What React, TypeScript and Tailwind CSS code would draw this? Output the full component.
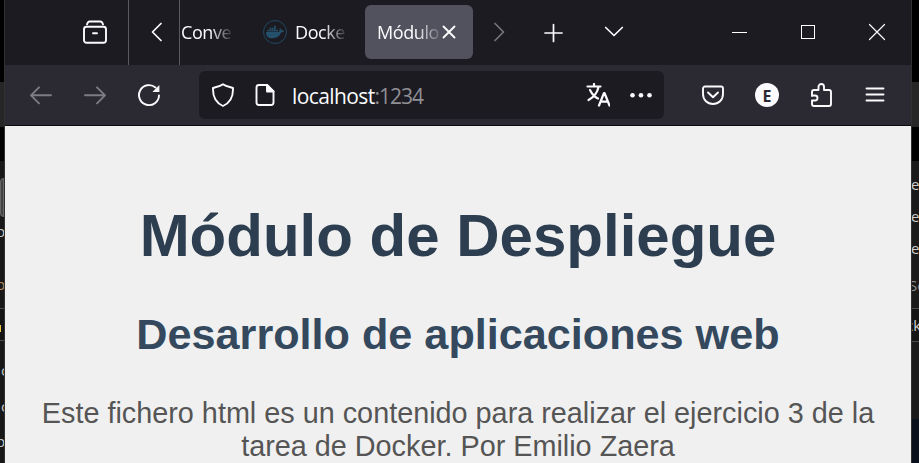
import React from "react";
import { FaDocker } from "react-icons/fa";

type IconProps = {
  children: React.ReactNode;
  size?: number;
  width?: number;
  className?: string;
};

function Icon({ children, size = 24, width = 1.9, className = "text-[#fbfbfe]" }: IconProps) {
  return (
    <svg
      width={size}
      height={size}
      viewBox="0 0 24 24"
      fill="none"
      stroke="currentColor"
      strokeWidth={width}
      strokeLinecap="round"
      strokeLinejoin="round"
      className={`block shrink-0 ${className}`}
    >
      {children}
    </svg>
  );
}

function Cell({ className, children }: { className: string; children: React.ReactNode }) {
  return <div className={`flex h-full shrink-0 items-center justify-center ${className}`}>{children}</div>;
}

const label = "whitespace-nowrap text-[18px] leading-6 tracking-[-0.4px] text-[#fbfbfe]";

function TabBar() {
  return (
    <div className="flex h-[65px] shrink-0 items-center bg-[#1c1b22] pb-px">
      <div className="flex h-full w-[123px] shrink-0 items-center pl-[78px]">
        <Icon>
          <path d="M4 4.400C4.600 2.400 5 1.500 6.500 1.500h11c1.500 0 1.900.9 2.500 2.900" />
          <rect x="1" y="6.800" width="22" height="16" rx="2.500" />
          <path d="M10 13.200h4" />
        </Icon>
      </div>
      <div className="-mb-px flex h-[65px] w-[52px] shrink-0 items-center justify-center border-x border-[#5b5a61] pb-px pl-1.5">
        <Icon width={1.700}><path d="M16 3.500 7.500 12l8.500 8.500" /></Icon>
      </div>
      <div className="w-[71px] shrink-0 pl-px">
        <div className={`w-[53px] ${label} [mask-image:linear-gradient(to_right,black_55%,transparent)]`}>Conve</div>
      </div>
      <div className="flex w-[114px] shrink-0 items-center gap-2 pl-3">
        <span className="flex size-6 shrink-0 items-center justify-center rounded-full border-[1.5px] border-[#1f4a63] text-[#24506b]">
          <FaDocker size={18} />
        </span>
        <div className={`w-[53px] ${label} [mask-image:linear-gradient(to_right,black_55%,transparent)]`}>Docke</div>
      </div>
      <div className="flex h-[54px] w-[108px] shrink-0 items-center rounded-md bg-[#52525e] pl-3">
        <div className={`w-[62px] ${label} [mask-image:linear-gradient(to_right,black_62%,transparent_108%)]`}>Módulo</div>
        <Icon className="-ml-0.5 text-[#fbfbfe]"><path d="m6.500 6.500 11 11M17.500 6.500l-11 11" /></Icon>
      </div>
      <Cell className="w-[52px]">
        <Icon width={1.700} className="text-[#77767c]"><path d="m8 3.500 8.500 8.500L8 20.500" /></Icon>
      </Cell>
      <Cell className="w-[56px] pt-0.5"><Icon width={1.700}><path d="M12.500 3.500v17M4 12h17" /></Icon></Cell>
      <Cell className="w-[66px]"><Icon width={1.700}><path d="m3.700 7.500 8.300 8 8.300-8" /></Icon></Cell>
      <div className="ml-auto flex h-full">
        <Cell className="w-[69px]"><span className="ml-0.5 h-px w-[15px] bg-white" /></Cell>
        <Cell className="w-[69px]"><span className="size-3.5 border border-white" /></Cell>
        <Cell className="w-[69px]"><Icon width={1.200}><path d="m4.500 4.500 15 15M19.500 4.500l-15 15" /></Icon></Cell>
      </div>
    </div>
  );
}

function Toolbar() {
  return (
    <div className="flex h-[61px] shrink-0 items-center border-b border-[#0c0c0d] bg-[#2b2a33] pl-6">
      <div className="flex w-[170px] shrink-0 gap-[30px]">
        <Icon className="text-[#7d7c83]"><path d="M22 12.300H2M10 4.300l-8 8 8 8" /></Icon>
        <Icon className="text-[#7d7c83]"><path d="M2 12.300h20M14 4.300l8 8-8 8" /></Icon>
        <Icon>
          <path d="M22 12.500A10 10 0 1 1 18.500 4.500" />
          <path d="M22.400 2v7h-7z" fill="currentColor" stroke="none" />
        </Icon>
      </div>
      <div className="flex h-12 w-[465px] shrink-0 items-center rounded-md bg-[#1c1b22] px-3">
        <Icon><path d="M12 1.200c3 2.100 6.500 2.700 10 3.800.3 7.500-2 14.500-10 18C4 19.500 1.700 12.500 2 5c3.500-1.100 7-1.700 10-3.800Z" /></Icon>
        <Icon className="ml-[18px] text-[#fbfbfe]">
          <path d="M14 2H6a2.500 2.500 0 0 0-2.500 2.500v15A2.500 2.500 0 0 0 6 22h12a2.500 2.500 0 0 0 2.500-2.500V8.500L14 2Z" />
          <path d="M14 2v6.500h6.500z" fill="currentColor" />
        </Icon>
        <div className="ml-[15px] pt-0.5 text-[21px] leading-7 tracking-[-0.7px] text-[#fbfbfe]">
          <span className="tracking-[-0.6px]">localhost</span><span className="tracking-[-1px] text-[#8f8f94]">:1234</span>
        </div>
        <div className="ml-auto flex gap-[18px]">
          <Icon width={2.200}>
            <path d="M1.500 3.500h13M8 1v2.500M12.500 4C11.500 9 8 14 2.500 17M4 7c2 4 4.500 7 8 8.500M13 22.500l5-12.500h.5l5 12.500M15 18.700h6.800" />
          </Icon>
          <Icon className="translate-x-px text-[#fbfbfe]">
            <g fill="currentColor" stroke="none">
              <circle cx="3.500" cy="12.300" r="2.300" /><circle cx="12" cy="12.300" r="2.300" /><circle cx="20.500" cy="12.300" r="2.300" />
            </g>
          </Icon>
        </div>
      </div>
      <div className="ml-[37px] flex gap-[30px]">
        <Icon>
          <path d="M4 3.500h16a2 2 0 0 1 2 2V11c0 6-4.500 10-10 10S2 17 2 11V5.500a2 2 0 0 1 2-2Z" />
          <path d="m7 9.500 5 4.800 5-4.800" />
        </Icon>
        <span className="flex size-6 items-center justify-center rounded-full bg-[#fbfbfe] pt-px font-['Open_Sans'] text-[16px] leading-6 font-bold text-[#2b2a33]">E</span>
        <Icon>
          <path d="M3 13V9a2 2 0 0 1 2-2h4.500V3.800a2.750 2.750 0 0 1 5.500 0V7h5a2 2 0 0 1 2 2v12a2 2 0 0 1-2 2H5a2 2 0 0 1-2-2v-3.500h3a2.500 2.500 0 0 0 0-5H3" />
        </Icon>
        <Icon><path d="M3.500 5.500h17M3.500 11.500h17M3.500 17.500h17" /></Icon>
      </div>
    </div>
  );
}

function LeftEdge() {
  return (
    <div className="flex w-[5px] shrink-0 flex-col overflow-hidden border-r border-[#303030] bg-[#181818] font-['Open_Sans'] text-[15px] leading-5 text-[#c8c8c8]">
      <div className="h-[82px] shrink-0 bg-black" />
      <div className="h-[45px] shrink-0 bg-[#262626]" />
      <div className="h-[34px] shrink-0 bg-black" />
      <div className="mt-[17px] h-[39px] shrink-0 rounded-l-md border border-[#666] bg-[#444]" />
      <div className="mt-1 h-5 shrink-0 -translate-x-1">p</div>
      <div className="mt-[33px] h-[34px] shrink-0 -translate-x-1 text-[#b88a60]">b</div>
      <div className="h-[33px] shrink-0 border-y border-[#4c4c4c] bg-[#141414]">
        <div className="mt-4 h-[7px] w-px bg-[#e8c840]" />
      </div>
      <div className="mt-[19px] h-5 shrink-0 translate-x-px">c</div>
      <div className="mt-4 h-5 shrink-0 translate-x-px">c</div>
      <div className="mt-[15px] h-5 shrink-0 -translate-x-1">p</div>
    </div>
  );
}

function RightEdge() {
  return (
    <div className="flex w-2 shrink-0 flex-col overflow-hidden border-l border-[#303030] bg-[#1a1a1a] font-['Open_Sans'] text-[15px] leading-5 whitespace-nowrap text-[#d0d0d0]">
      <div className="h-[82px] shrink-0 bg-black" />
      <div className="h-[45px] shrink-0 bg-[#262626]" />
      <div className="h-[34px] shrink-0 bg-black" />
      <div className="mt-[13px] h-5 shrink-0 -translate-x-px">e</div>
      <div className="mt-3 h-5 shrink-0 -translate-x-px">e</div>
      <div className="mt-3 h-5 shrink-0 -translate-x-px">e</div>
      <div className="mt-[17px] h-[33px] shrink-0 -translate-x-[3px] text-[#929292]">So</div>
      <div className="h-[34px] shrink-0 border-y border-[#4c4c4c] bg-[#141414] pt-1.5">
        <div className="-ml-1.5">ck</div>
      </div>
      <div className="h-[77px] shrink-0" />
      <div className="flex-1 bg-[#0b111c]" />
    </div>
  );
}

export default function App() {
  return (
    <div className="flex h-[463px] w-[919px] overflow-hidden bg-[#181818]">
      <LeftEdge />
      <div className="flex w-[906px] shrink-0 flex-col overflow-hidden font-['Open_Sans','Noto_Sans',sans-serif]">
        <TabBar />
        <Toolbar />
        <main className="flex-1 bg-[#f0f0f0] px-[30px] pt-[76px] text-center font-['Liberation_Sans',Arial,sans-serif]">
          <h1 className="text-[60px] leading-[68px] font-bold text-[#2c3e50]">Módulo de Despliegue</h1>
          <h2 className="mt-[39px] text-[43.2px] leading-[50px] font-bold text-[#34495e]">Desarrollo de aplicaciones web</h2>
          <p className="mt-[38px] text-[28.8px] leading-[33px] text-[#555]">
            Este fichero html es un contenido para realizar el ejercicio 3 de la
            <br />
            tarea de Docker. Por Emilio Zaera
          </p>
        </main>
      </div>
      <RightEdge />
    </div>
  );
}
